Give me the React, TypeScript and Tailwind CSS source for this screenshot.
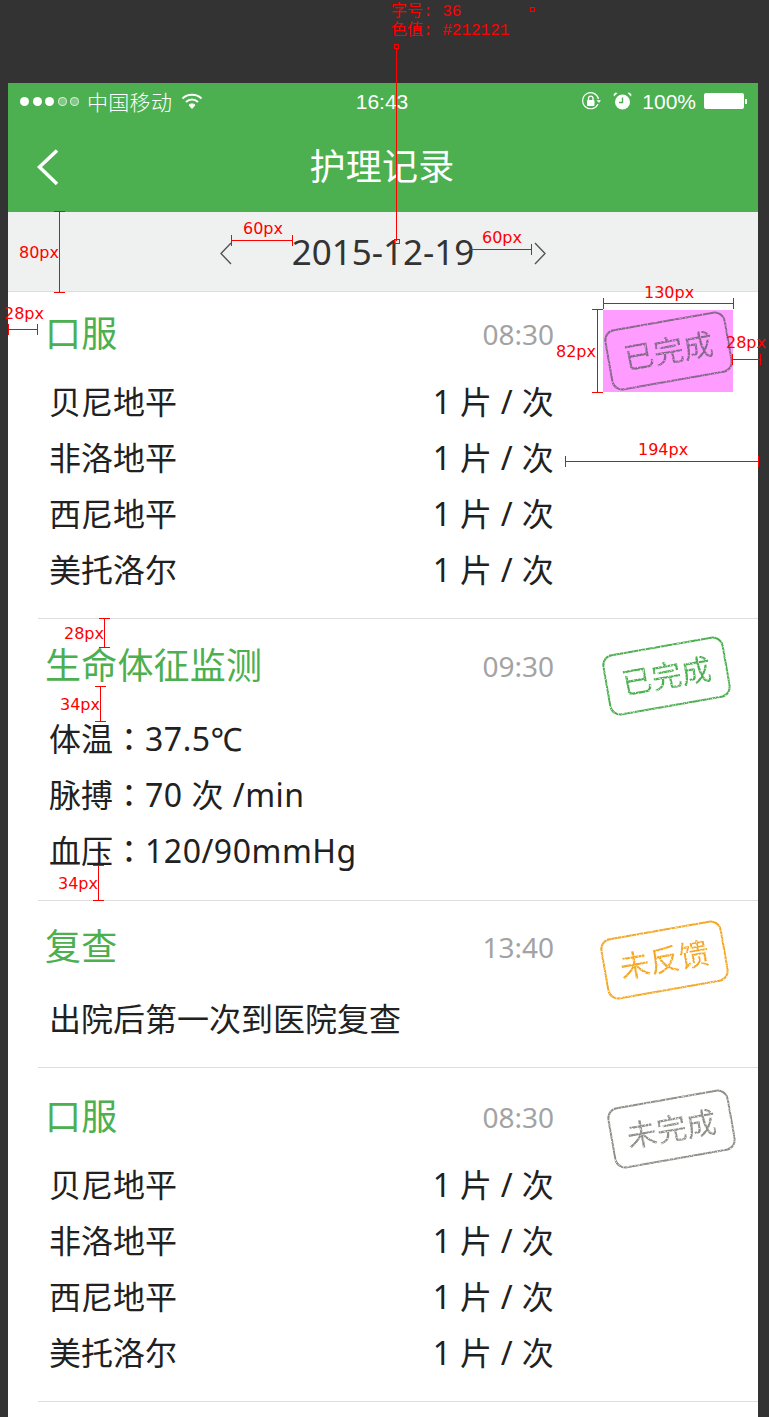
const cjk = "font-['Noto_Sans','Noto_Sans_CJK_SC',sans-serif]";

type Row = { label: string; value?: string; amount?: string };

const pills: Row[] = [
  { label: '贝尼地平', amount: '1 片 / 次' },
  { label: '非洛地平', amount: '1 片 / 次' },
  { label: '西尼地平', amount: '1 片 / 次' },
  { label: '美托洛尔', amount: '1 片 / 次' },
];

const sections: {
  title: string;
  time: string;
  rows: Row[];
  colClass: string;
  gapClass: string;
  stampBox: string;
  stampClass: string;
  stamp: string;
}[] = [
  {
    title: '口服',
    time: '08:30',
    rows: pills,
    colClass: 'pt-[17px] pb-[20px]',
    gapClass: 'mb-[15px]',
    stampBox: 'ml-[49px] mt-[18px] bg-[#ff9cff]',
    stampClass: 'border-[#84688a] text-[#84688a]',
    stamp: '已完成',
  },
  {
    title: '生命体征监测',
    time: '09:30',
    rows: [
      { label: '体温', value: '37.5℃' },
      { label: '脉搏', value: '70 次 /min' },
      { label: '血压', value: '120/90mmHg' },
    ],
    colClass: 'pt-[22px] pb-[22px]',
    gapClass: 'mb-[19px]',
    stampBox: 'ml-[47px] mt-[16px]',
    stampClass: 'border-[#4caf50] text-[#4caf50]',
    stamp: '已完成',
  },
  {
    title: '复查',
    time: '13:40',
    rows: [{ label: '出院后第一次到医院复查' }],
    colClass: 'pt-[21px] pb-[20px]',
    gapClass: 'mb-[19px]',
    stampBox: 'ml-[45px] mt-[18px]',
    stampClass: 'border-[#f5a623] text-[#f5a623]',
    stamp: '未反馈',
  },
  {
    title: '口服',
    time: '08:30',
    rows: pills,
    colClass: 'pt-[24px] pb-[20px]',
    gapClass: 'mb-[15px]',
    stampBox: 'ml-[52px] mt-[20px]',
    stampClass: 'border-[#8f8f8a] text-[#8f8f8a]',
    stamp: '未完成',
  },
];

const Hline = ({ x, y, w }: { x: string; y: string; w: string }) => (
  <div className={`absolute ${x} ${y} ${w} h-px bg-[#f00]`} />
);

const Note = ({ pos, children }: { pos: string; children: string }) => (
  <div className={`absolute ${pos} font-['DejaVu_Sans',sans-serif] text-[16px] leading-[18px] text-[#f00] whitespace-nowrap`}>{children}</div>
);

const Tick = ({ pos }: { pos: string }) => <div className={`absolute ${pos} bg-[#f00]`} />;

const Annotations = () => (
  <div className="absolute inset-0 pointer-events-none">
    <div className="absolute left-[391px] top-[3px] font-['Liberation_Mono','Noto_Sans_CJK_SC',monospace] text-[16px] leading-[19px] text-[#f00] whitespace-pre">
      {'字号: 36\n色值: #212121'}
    </div>
    <div className="absolute left-[530px] top-[7px] w-[5px] h-[5px] border border-[#f00]" />
    <div className="absolute left-[394px] top-[44px] w-[5px] h-[5px] border border-[#f00]" />
    <Tick pos="left-[396px] top-[49px] w-px h-[192px]" />
    <div className="absolute left-[394px] top-[239px] w-[6px] h-[5px] border border-[#f00]" />

    <Hline x="left-[231px]" y="top-[240px]" w="w-[61px]" />
    <Tick pos="left-[231px] top-[235px] w-px h-[11px]" />
    <Tick pos="left-[292px] top-[235px] w-px h-[11px]" />
    <Note pos="left-[243px] top-[220px]">60px</Note>

    <Hline x="left-[470px]" y="top-[249px]" w="w-[62px]" />
    <Tick pos="left-[531px] top-[244px] w-px h-[11px]" />
    <Note pos="left-[482px] top-[229px]">60px</Note>

    <Tick pos="left-[59px] top-[211px] w-px h-[81px]" />
    <Tick pos="left-[54px] top-[211px] w-[11px] h-px" />
    <Tick pos="left-[54px] top-[292px] w-[11px] h-px" />
    <Note pos="left-[19px] top-[244px]">80px</Note>

    <Hline x="left-[603px]" y="top-[303px]" w="w-[130px]" />
    <Tick pos="left-[603px] top-[298px] w-px h-[11px]" />
    <Tick pos="left-[733px] top-[298px] w-px h-[11px]" />
    <Note pos="left-[644px] top-[284px]">130px</Note>

    <Tick pos="left-[597px] top-[309px] w-px h-[83px]" />
    <Tick pos="left-[592px] top-[309px] w-[11px] h-px" />
    <Tick pos="left-[592px] top-[392px] w-[11px] h-px" />
    <Note pos="left-[556px] top-[343px]">82px</Note>

    <Hline x="left-[732px]" y="top-[359px]" w="w-[29px]" />
    <Tick pos="left-[760px] top-[354px] w-px h-[11px]" />
    <Tick pos="left-[732px] top-[354px] w-px h-[11px]" />
    <Note pos="left-[726px] top-[334px]">28px</Note>

    <Hline x="left-[565px]" y="top-[461px]" w="w-[194px]" />
    <Tick pos="left-[565px] top-[456px] w-px h-[11px]" />
    <Tick pos="left-[758px] top-[456px] w-px h-[11px]" />
    <Note pos="left-[638px] top-[441px]">194px</Note>

    <Hline x="left-[8px]" y="top-[329px]" w="w-[30px]" />
    <Tick pos="left-[8px] top-[324px] w-px h-[11px]" />
    <Tick pos="left-[37px] top-[324px] w-px h-[11px]" />
    <Note pos="left-[4px] top-[305px]">28px</Note>

    <Tick pos="left-[104px] top-[618px] w-px h-[29px]" />
    <Tick pos="left-[99px] top-[618px] w-[11px] h-px" />
    <Tick pos="left-[99px] top-[647px] w-[11px] h-px" />
    <Note pos="left-[64px] top-[625px]">28px</Note>

    <Tick pos="left-[100px] top-[686px] w-px h-[35px]" />
    <Tick pos="left-[95px] top-[686px] w-[11px] h-px" />
    <Tick pos="left-[95px] top-[721px] w-[11px] h-px" />
    <Note pos="left-[60px] top-[696px]">34px</Note>

    <Tick pos="left-[98px] top-[865px] w-px h-[35px]" />
    <Tick pos="left-[93px] top-[865px] w-[11px] h-px" />
    <Tick pos="left-[93px] top-[900px] w-[11px] h-px" />
    <Note pos="left-[58px] top-[875px]">34px</Note>
  </div>
);

const StatusBar = () => (
  <div className="h-[38px] pb-[2px] flex items-center justify-between pl-[12px] pr-[11px] text-white font-['Liberation_Sans','Noto_Sans_CJK_SC',sans-serif]">
    <div className="flex flex-1 items-center">
      <div className="flex gap-[3.5px]">
        <span className="w-[9px] h-[9px] rounded-full bg-white" />
        <span className="w-[9px] h-[9px] rounded-full bg-white" />
        <span className="w-[9px] h-[9px] rounded-full bg-white" />
        <span className="w-[9px] h-[9px] rounded-full border border-white/70 bg-white/30" />
        <span className="w-[9px] h-[9px] rounded-full border border-white/70 bg-white/30" />
      </div>
      <span className="ml-[8px] text-[21px] leading-none tracking-[0.3px] font-['Noto_Sans_CJK_SC',sans-serif] font-light">中国移动</span>
      <svg className="ml-[9px]" width="22" height="18" viewBox="0 0 22 18" fill="none" stroke="white">
        <path d="M1.5 6.5 C6.5 1.5 15.5 1.5 20.5 6.5" strokeWidth="2" />
        <path d="M5 10 C8.5 6.5 13.5 6.5 17 10" strokeWidth="2" />
        <path d="M8 13 C10 11.5 12 11.5 14 13 L11 16.5 Z" fill="white" strokeWidth="1" />
      </svg>
    </div>
    <span className="text-[21px] leading-none ml-[-3px] mt-[1px]">16:43</span>
    <div className="flex flex-1 items-center justify-end">
      <svg width="20" height="20" viewBox="0 0 20 20" fill="none" stroke="white">
        <path d="M17 13 A8 8 0 1 1 17.5 8" strokeWidth="1.2" />
        <path d="M16 9.5 L19.5 9.5 L18 11.5 Z" fill="white" strokeWidth="0.5" />
        <rect x="6" y="9" width="7.5" height="6" rx="1" fill="white" strokeWidth="0" />
        <path d="M7.5 9 V7 A2.3 2.3 0 0 1 12 7 V9" strokeWidth="1.3" />
      </svg>
      <svg className="ml-[12px]" width="19" height="20" viewBox="0 0 19 20">
        <circle cx="9.5" cy="11" r="7.5" fill="white" />
        <path d="M9.5 6.5 V11.5 H6" fill="none" stroke="#4caf50" strokeWidth="1.4" />
        <path d="M1 5.5 L4.5 2 L2.5 1.5 L0.5 3.5 Z M18 5.5 L14.5 2 L16.5 1.5 L18.5 3.5 Z" fill="white" />
      </svg>
      <span className="ml-[10px] text-[21px] leading-none mt-[1px]">100%</span>
      <div className="ml-[8px] w-[40px] h-[16px] rounded-[2px] bg-white" />
      <div className="ml-[1px] w-[2px] h-[5px] bg-white" />
    </div>
  </div>
);

const Stamp = ({ box, cls, text }: { box: string; cls: string; text: string }) => (
  <div className={`w-[130px] h-[82px] shrink-0 self-start flex items-center justify-center ${box}`}>
    <div className="[filter:url(#worn)]">
      <div className={`w-[123px] h-[62px] rotate-[-10deg] border-2 rounded-[11px] flex items-center justify-center ${cjk} text-[30px] leading-none ${cls}`}>
        {text}
      </div>
    </div>
  </div>
);

export default function App() {
  return (
    <div className={`relative w-[769px] h-[1417px] overflow-hidden bg-[#333333] pt-[83px] pl-[8px] ${cjk}`}>
      <svg width="0" height="0" className="absolute">
        <filter id="worn" x="-20%" y="-40%" width="140%" height="180%">
          <feTurbulence type="fractalNoise" baseFrequency="0.6" numOctaves="2" seed="4" />
          <feColorMatrix values="0 0 0 0 0  0 0 0 0 0  0 0 0 0 0  0 0 0 -3 2.5" />
          <feComposite in="SourceGraphic" operator="in" />
        </filter>
      </svg>

      <div className="w-[750px] h-[1334px] bg-white">
        <div className="bg-[#4caf50]">
          <StatusBar />
          <div className="h-[91px] grid grid-cols-[1fr_auto_1fr] items-center">
            <svg className="ml-[28px]" width="24" height="38" viewBox="0 0 24 38" fill="none" stroke="white" strokeWidth="3.5">
              <path d="M21 2.5 L3.5 19 L21 36" />
            </svg>
            <div className="text-[36px] leading-none tracking-[0.3px] text-white mr-[2px]">护理记录</div>
            <div />
          </div>
        </div>

        <div className="h-[80px] bg-[#eff0f0] border-b border-[#dedede] flex items-center justify-center gap-[60px]">
          <svg className="mt-[4px]" width="13" height="23" viewBox="0 0 13 23" fill="none" stroke="#555" strokeWidth="1.4">
            <path d="M12 1 L2 11.5 L12 22" />
          </svg>
          <div className="text-[35px] leading-none text-[#333]">2015-12-19</div>
          <svg className="mt-[4px]" width="13" height="23" viewBox="0 0 13 23" fill="none" stroke="#555" strokeWidth="1.4">
            <path d="M1 1 L11 11.5 L1 22" />
          </svg>
        </div>

        {sections.map((s, i) => (
          <div key={i} className="ml-[30px] flex border-b border-[#dedede]">
            <div className={`w-[516px] shrink-0 pl-[11px] ${s.colClass}`}>
              <div className={`h-[50px] flex items-center justify-between ${s.gapClass}`}>
                <span className="text-[36px] leading-none tracking-[0.2px] text-[#4caf50] ml-[-4px]">{s.title}</span>
                <span className="text-[28px] leading-none text-[#a3a3a3]">{s.time}</span>
              </div>
              {s.rows.map((r) => (
                <div key={r.label} className="h-[56px] flex items-center justify-between text-[32px] leading-none text-[#212121]">
                  <span>
                    {r.label}
                    {r.value && (
                      <>
                        <span className="font-['Noto_Sans_CJK_TC',sans-serif]">：</span>
                        <span className="tracking-[0.5px]">{r.value}</span>
                      </>
                    )}
                  </span>
                  {r.amount && <span className="tracking-[0.3px]">{r.amount}</span>}
                </div>
              ))}
            </div>
            <Stamp box={s.stampBox} cls={s.stampClass} text={s.stamp} />
          </div>
        ))}
      </div>

      <Annotations />
    </div>
  );
}
